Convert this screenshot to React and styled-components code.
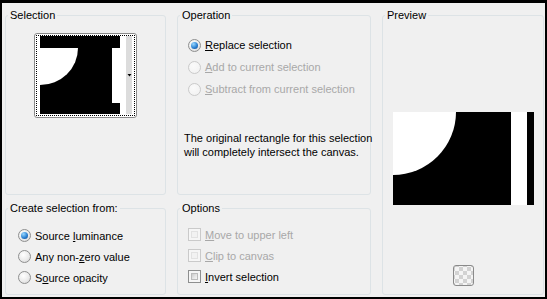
import React from "react";
import styled, { createGlobalStyle } from "styled-components";

const GlobalStyle = createGlobalStyle`
  html, body {
    margin: 0;
    padding: 0;
    background: #000;
  }
  body {
    font-family: "Liberation Sans", Arial, sans-serif;
    font-size: 11px;
    color: #000;
  }
`;

const Frame = styled.div`
  width: 547px;
  height: 299px;
  box-sizing: border-box;
  background: #000;
  padding: 3px 2px 2px 2px;
`;

const Panel = styled.div`
  height: 100%;
  box-sizing: border-box;
  background: #f0f0f0;
  padding: 5px 0 0 3px;
  display: grid;
  grid-template-columns: 161px 194px 162px;
  grid-template-rows: 187px 94px;
  column-gap: 11px;
  row-gap: 6px;
`;

const Group = styled.fieldset`
  margin: 0;
  padding: 0;
  min-width: 0;
  border: 1px solid #dde3e6;
  border-radius: 3px;
  box-sizing: border-box;
  display: flex;
  flex-direction: column;
  grid-column: ${(p) => p.$col};
  grid-row: ${(p) => p.$row};
`;

const Legend = styled.legend`
  margin-left: 2px;
  padding: 0 2px;
  line-height: 14px;
`;

const Thumb = styled.div`
  margin: 11px auto 0;
  width: 103px;
  height: 85px;
  box-sizing: border-box;
  border: 1px solid #8a8a8a;
  border-radius: 3px;
  padding: 1px;
  background: #fff;
`;

const FocusRect = styled.div`
  height: 100%;
  box-sizing: border-box;
  border: 1px dotted #000;
  padding-left: 3px;
  display: flex;
`;

const Options = styled.div`
  margin-top: ${(p) => p.$top}px;
  padding-left: ${(p) => p.$left}px;
  display: flex;
  flex-direction: column;
`;

const Row = styled.label`
  height: ${(p) => p.$h}px;
  display: flex;
  align-items: center;
  gap: 4px;
  color: ${(p) => (p.$disabled ? "#a8a8a8" : "#000")};
  white-space: nowrap;
`;

const RadioMark = styled.span`
  width: 13px;
  height: 13px;
  box-sizing: border-box;
  border-radius: 50%;
  border: 1px solid ${(p) => (p.$disabled ? "#cacaca" : "#8e8f8f")};
  background: ${(p) =>
    p.$disabled
      ? "radial-gradient(circle at 40% 35%, #fafafa 0%, #f0f0f0 100%)"
      : "radial-gradient(circle at 40% 35%, #ffffff 0%, #ebebeb 55%, #d2d2d2 100%)"};
  display: flex;
  align-items: center;
  justify-content: center;
  flex: none;

  &::after {
    content: "";
    display: ${(p) => (p.$checked ? "block" : "none")};
    width: 7px;
    height: 7px;
    border-radius: 50%;
    background: radial-gradient(circle at 35% 30%, #9ad8ff 0%, #2d83d4 55%, #0c3f86 100%);
  }
`;

const CheckMark = styled.span`
  width: 13px;
  height: 13px;
  box-sizing: border-box;
  border: 1px solid ${(p) => (p.$disabled ? "#cacaca" : "#8e8f8f")};
  background: #f6f6f6;
  padding: 2px;
  flex: none;

  &::after {
    content: "";
    display: block;
    width: 100%;
    height: 100%;
    box-sizing: border-box;
    border: 1px solid ${(p) => (p.$disabled ? "#e2e2e2" : "#bcbcbc")};
    background: ${(p) =>
      p.$disabled
        ? "#f2f2f2"
        : "linear-gradient(135deg, #cbcbcb 0%, #e4e4e4 50%, #f6f6f6 100%)"};
  }
`;

const Note = styled.p`
  margin: 31px 0 0;
  padding-left: 6px;
  line-height: 14px;
  white-space: nowrap;
`;

const PreviewArea = styled.div`
  flex: 1;
  display: flex;
  flex-direction: column;
  align-items: center;
`;

const PreviewImage = styled.svg`
  margin-top: 90px;
  display: block;
`;

const CheckerButton = styled.button`
  margin-top: 60px;
  width: 21px;
  height: 21px;
  padding: 0;
  box-sizing: border-box;
  border: 1px solid #8a8a8a;
  border-radius: 3px;
  background-color: #f4f4f4;
  background-image: conic-gradient(#d2d2d2 25%, transparent 0 50%, #d2d2d2 0 75%, transparent 0);
  background-size: 8px 8px;
  background-position: 1px 1px;
`;

function Radio({ label, checked, disabled, h = 21 }) {
  return (
    <Row $h={h} $disabled={disabled}>
      <RadioMark $checked={checked} $disabled={disabled} />
      <span>{label}</span>
    </Row>
  );
}

function Check({ label, disabled, h = 21 }) {
  return (
    <Row $h={h} $disabled={disabled}>
      <CheckMark $disabled={disabled} />
      <span>{label}</span>
    </Row>
  );
}

export default function App() {
  return (
    <>
      <GlobalStyle />
      <Frame>
        <Panel>
          <Group $col="1" $row="1">
            <Legend>Selection</Legend>
            <Thumb>
              <FocusRect>
                <svg width="92" height="78" viewBox="0 0 92 78">
                  <rect x="0" y="0" width="80" height="78" fill="#000" />
                  <path d="M0 12 H38 A38 37 0 0 1 0 49 Z" fill="#fff" />
                  <rect x="72" y="12" width="8" height="55" fill="#fff" />
                  <rect x="80" y="0" width="6" height="78" fill="#fff" />
                  <rect x="86" y="0" width="6" height="78" fill="#dcdcdc" />
                  <polygon points="87.5,38 91.5,38 89.5,40.5" fill="#000" />
                </svg>
              </FocusRect>
            </Thumb>
          </Group>

          <Group $col="2" $row="1">
            <Legend>Operation</Legend>
            <Options $top={12} $left={10}>
              <Radio h={22} checked label={<><u>R</u>eplace selection</>} />
              <Radio h={22} disabled label={<><u>A</u>dd to current selection</>} />
              <Radio h={22} disabled label={<><u>S</u>ubtract from current selection</>} />
            </Options>
            <Note>
              The original rectangle for this selection
              <br />
              will completely intersect the canvas.
            </Note>
          </Group>

          <Group $col="3" $row="1 / span 2">
            <Legend>Preview</Legend>
            <PreviewArea>
              <PreviewImage width="141" height="93" viewBox="0 0 141 93">
                <rect x="0" y="0" width="141" height="93" fill="#000" />
                <path d="M0 0 H63 A63 63 0 0 1 0 63 Z" fill="#fff" />
                <rect x="118" y="0" width="16" height="93" fill="#fff" />
              </PreviewImage>
              <CheckerButton aria-label="Transparency" />
            </PreviewArea>
          </Group>

          <Group $col="1" $row="2">
            <Legend>Create selection from:</Legend>
            <Options $top={10} $left={12}>
              <Radio checked label={<>Source <u>l</u>uminance</>} />
              <Radio label={<>Any non-<u>z</u>ero value</>} />
              <Radio label={<>S<u>o</u>urce opacity</>} />
            </Options>
          </Group>

          <Group $col="2" $row="2">
            <Legend>Options</Legend>
            <Options $top={9} $left={10}>
              <Check disabled label={<><u>M</u>ove to upper left</>} />
              <Check disabled label={<><u>C</u>lip to canvas</>} />
              <Check label={<><u>I</u>nvert selection</>} />
            </Options>
          </Group>
        </Panel>
      </Frame>
    </>
  );
}
